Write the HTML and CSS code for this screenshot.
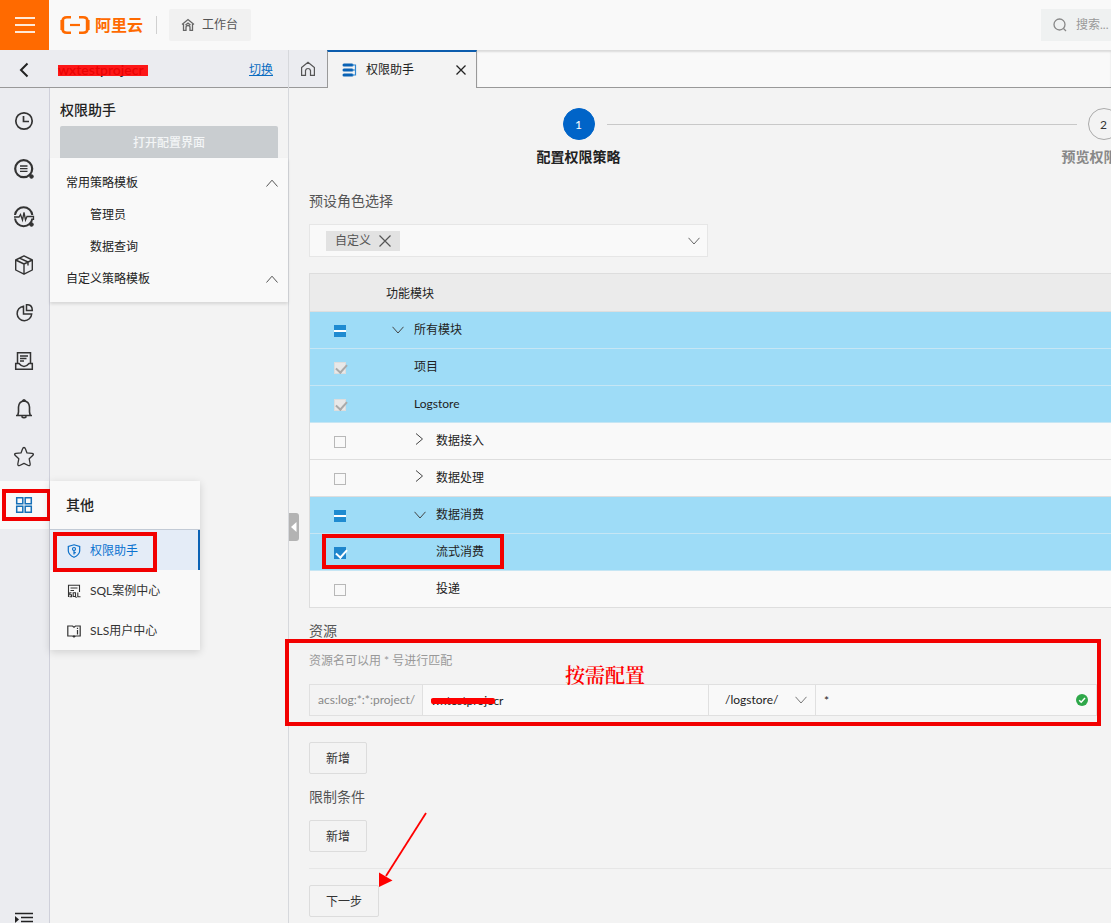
FILE: index.html
```html
<!DOCTYPE html>
<html lang="zh-CN">
<head>
<meta charset="utf-8">
<title>权限助手</title>
<link rel="stylesheet" href="styles.css">
</head>
<body>
<header class="topbar">
  <button class="menu-btn" aria-label="菜单"><span></span><span></span><span></span></button>
  <a class="logo" href="#">
    <svg width="30" height="20" viewBox="0 0 30 20" fill="none" stroke="#ff6a00">
      <path d="M11 2.200H7Q2.500 2.200 2.500 6.200V13.800Q2.500 17.800 7 17.800H11" stroke-width="2.600"/>
      <path d="M2.300 5V15M27.700 5V15" stroke-width="3.800"/>
      <path d="M19 2.200H23Q27.500 2.200 27.500 6.200V13.800Q27.500 17.800 23 17.800H19" stroke-width="2.600"/>
      <path d="M10 10H20" stroke-width="2.200"/>
    </svg>
    <span>阿里云</span>
  </a>
  <span class="topbar-rule"></span>
  <a class="workbench" href="#">
    <svg width="14" height="14" viewBox="0 0 14 14" fill="none" stroke="#666" stroke-width="1.300"><path d="M1 6.500 7 1.500 13 6.500M2.500 6V12.300H5V9.500a2 2 0 0 1 4 0V12.300H11.500V6M4.500 7 7 5 9.500 7"/></svg>
    工作台
  </a>
  <label class="search">
    <svg width="14" height="14" viewBox="0 0 14 14" fill="none" stroke="#888" stroke-width="1.300"><circle cx="6.500" cy="6.500" r="5.500"/><path d="M10.500 10.500 13 13"/></svg>
    <input type="text" placeholder="搜索..." aria-label="搜索">
  </label>
</header>

<div class="shell">
  <aside class="side">
    <div class="project">
      <button class="back" aria-label="返回"><svg width="12" height="16" viewBox="0 0 12 16" fill="none" stroke="#222" stroke-width="2"><path d="M9.500 1.500 3 8l6.500 6.500"/></svg></button>
      <span class="project-name">wxtestprojecr</span>
      <a class="switch" href="#">切换</a>
    </div>
    <div class="side-body">
      <nav class="rail" aria-label="功能">
        <button class="rail-item" aria-label="历史"><svg width="20" height="20" viewBox="0 0 20 20" fill="none" stroke="#333" stroke-width="1.700"><circle cx="10" cy="10" r="8.200"/><path d="M9.500 5V10.500H15"/></svg></button>
        <button class="rail-item" aria-label="日志"><svg width="22" height="22" viewBox="0 0 22 22" fill="none" stroke="#333"><circle cx="10.700" cy="10.700" r="8.500" stroke-width="2.200"/><path d="M7 8H14.500M7 10.700H14.500M7 13.400H14.500" stroke-width="1.300"/><circle cx="18.500" cy="18.500" r="1.800" fill="#333"/></svg></button>
        <button class="rail-item" aria-label="监控"><svg width="22" height="22" viewBox="0 0 22 22" fill="none" stroke="#333"><path d="M2 9A8.700 8.700 0 0 1 19.300 9M19.300 12.500A8.700 8.700 0 0 1 2 12.500" stroke-width="2"/><path d="M1 11H6L7.500 8.500 9.500 14 11 6.500 12.500 14 14 10.500H20.500V14" stroke-width="1.300"/><circle cx="18.500" cy="18.500" r="1.800" fill="#333"/></svg></button>
        <button class="rail-item" aria-label="资源"><svg width="20" height="20" viewBox="0 0 20 20" fill="none" stroke="#333" stroke-width="1.400" stroke-linejoin="round"><path d="M10 .9 18.300 5V15L10 19.200 1.700 15V5ZM1.700 5 10 9 18.300 5M10 9V19M5.500 3.200 14 7V10.500"/></svg></button>
        <button class="rail-item" aria-label="仪表盘"><svg width="20" height="20" viewBox="0 0 20 20" fill="none" stroke="#333" stroke-width="1.500"><path d="M9.500 3.200A7.300 7.300 0 1 0 17.700 11H9.500ZM12.500 1.800H14Q18.300 2.200 18.300 7.500H12.500Z"/></svg></button>
        <button class="rail-item" aria-label="报表"><svg width="20" height="20" viewBox="0 0 20 20" fill="none" stroke="#333" stroke-width="1.500"><path d="M3.500 12.500V1.800H16.500V12.500M1.700 12.500H5Q10 18.500 15 12.500H18.300V18.300H1.700Z"/><path d="M6 5H14M6 7.500H12.500M6 10H10"/></svg></button>
        <button class="rail-item" aria-label="告警"><svg width="20" height="22" viewBox="0 0 20 22" fill="none" stroke="#333" stroke-width="1.600"><path d="M2 17.500H18M3.800 17.500 4.500 14V9Q5 3.300 10 3 15 3.300 15.500 9V14L16.200 17.500M8.500 3Q10 .5 11.500 3M7.500 18.500Q10 21 12.500 18.500"/></svg></button>
        <button class="rail-item" aria-label="收藏"><svg width="22" height="22" viewBox="0 0 22 22" fill="none" stroke="#333" stroke-width="1.300" stroke-linejoin="round"><path d="M11 1.500Q12 1.500 12.400 2.800L14 6.900 19 7.400Q21 7.800 20.200 9L16.200 12.800 17.200 18Q17.200 20.300 15.300 19.500L11 17.300 6.700 19.500Q4.800 20.300 4.800 18L5.800 12.800 1.800 9Q1 7.800 3 7.400L8 6.900 9.600 2.800Q10 1.500 11 1.500Z"/></svg></button>
        <div class="rail-group">
          <button class="rail-item rail-active" aria-label="其他"><svg width="18" height="18" viewBox="0 0 18 18" fill="none" stroke="#1670b8" stroke-width="1.500"><path d="M1.700 1.700H7.800V7.800H1.700ZM10.200 1.700H16.300V7.800H10.200ZM1.700 10.200H7.800V16.300H1.700ZM10.200 10.200H16.300V16.300H10.200Z"/></svg></button>
          <span class="mark mark-rail"></span>
          <div class="flyout">
            <h2 class="flyout-title">其他</h2>
            <a class="flyout-item selected" href="#"><svg width="14" height="14" viewBox="0 0 14 14" fill="none" stroke="#0a6fc9" stroke-width="1.200"><path d="M7 .8 12.700 2.500V7Q12.300 11 7 13.300 1.700 11 1.300 7V2.500Z"/><circle cx="7" cy="5" r="1.500"/><path d="M7 6.500V10.500M7 8.700H8.800"/></svg>权限助手</a>
            <a class="flyout-item" href="#"><svg width="14" height="14" viewBox="0 0 14 14" fill="none" stroke="#333" stroke-width="1.100"><path d="M1.500 13V1.200H12.500V8M3.500 4H10.500M3.500 6.500H7M4.500 8.800H2.800V10.800H4.500V12.800H2.500M6.200 8.800H8.500V12.500H6.200ZM8 12 9.500 13.800M10.800 8.500V12.800H13.500"/></svg>SQL案例中心</a>
            <a class="flyout-item" href="#"><svg width="14" height="14" viewBox="0 0 14 14" fill="none" stroke="#333" stroke-width="1.200"><path d="M.8 2H5.500L7 3.200 8.500 2H13.200V12H8.500L7 13 5.500 12H.8ZM10.500 6V10.500M10.500 3.800V5M7 11V13"/></svg>SLS用户中心</a>
            <span class="mark mark-flyout"></span>
          </div>
        </div>
        <button class="rail-collapse" aria-label="展开"><svg width="18" height="18" viewBox="0 0 18 18" fill="none" stroke="#222" stroke-width="1.600"><path d="M0 1.500H18M6 5.500H18M6 9.500H18M0 13.500H18"/><path d="M0 4 4 7.500 0 11Z" fill="#222" stroke="none"/></svg></button>
      </nav>
      <section class="panel">
        <h1 class="panel-title">权限助手</h1>
        <button class="open-config" disabled>打开配置界面</button>
        <ul class="tree">
          <li class="tree-row">常用策略模板<svg width="12" height="8" viewBox="0 0 12 8" fill="none" stroke="#555"><path d="M.5 7.500 6 1.200 11.500 7.500"/></svg></li>
          <li class="tree-row tree-leaf">管理员</li>
          <li class="tree-row tree-leaf">数据查询</li>
          <li class="tree-row">自定义策略模板<svg width="12" height="8" viewBox="0 0 12 8" fill="none" stroke="#555"><path d="M.5 7.500 6 1.200 11.500 7.500"/></svg></li>
        </ul>
      </section>
    </div>
    <button class="handle" aria-label="收起"><svg width="6" height="10" viewBox="0 0 6 10"><path d="M5.500 0V10L0 5Z" fill="#fff"/></svg></button>
  </aside>

  <main class="main">
    <div class="tabs">
      <button class="tab-home" aria-label="首页"><svg width="16" height="16" viewBox="0 0 16 16" fill="none" stroke="#555" stroke-width="1.200"><path d="M1.600 6.500 8 1.200 14.400 6.500V14.400H10.500V9.500Q10 7.500 8 7.500T5.500 9.500V14.400H1.600Z"/></svg></button>
      <div class="tab">
        <svg width="15" height="14" viewBox="0 0 15 14"><path d="M2 2H10M2 7H10M2 12H10" stroke="#0a62b5" stroke-width="3" stroke-linecap="round"/><path d="M10 2H13.500V12H10M10 7H13.500" fill="none" stroke="#2f86d0" stroke-width="1.200"/></svg>
        <span class="tab-label">权限助手</span>
        <button class="icon-btn" aria-label="关闭"><svg width="12" height="12" viewBox="0 0 12 12" stroke="#222" stroke-width="1.300"><path d="M1.500 1.500 10.500 10.500M10.500 1.500 1.500 10.500"/></svg></button>
      </div>
      <div class="tabs-rest"></div>
    </div>

    <div class="content">
      <ol class="steps">
        <li class="step current"><span class="dot">1</span><span class="step-label">配置权限策略</span></li>
        <li class="step"><span class="dot">2</span><span class="step-label">预览权限策略</span></li>
      </ol>

      <h3 class="label label-role">预设角色选择</h3>
      <div class="role-select">
        <span class="tag">自定义<button class="icon-btn" aria-label="移除"><svg width="14" height="14" viewBox="0 0 14 14" stroke="#555" stroke-width="1.200"><path d="M1.500 1.500 12.500 12.500M12.500 1.500 1.500 12.500"/></svg></button></span>
        <button class="icon-btn" aria-label="展开选项"><svg width="12" height="8" viewBox="0 0 12 8" fill="none" stroke="#666"><path d="M.5 .8 6 7 11.500 .8"/></svg></button>
      </div>

      <table class="modules">
        <thead><tr><th class="c-check"></th><th>功能模块</th></tr></thead>
        <tbody>
          <tr class="on"><td class="c-check"><input type="checkbox" class="partial" aria-label="所有模块"></td><td class="l0"><svg class="arrow" width="12" height="8" viewBox="0 0 12 8"><path d="M.5 .8 6 7 11.500 .8"/></svg>所有模块</td></tr>
          <tr class="on"><td class="c-check"><input type="checkbox" checked disabled aria-label="项目"></td><td class="l1">项目</td></tr>
          <tr class="on"><td class="c-check"><input type="checkbox" checked disabled aria-label="Logstore"></td><td class="l1">Logstore</td></tr>
          <tr><td class="c-check"><input type="checkbox" aria-label="数据接入"></td><td class="l1"><svg class="arrow" width="12" height="12" viewBox="0 0 12 12"><path d="M2 .5 8.500 6 2 11.500"/></svg>数据接入</td></tr>
          <tr><td class="c-check"><input type="checkbox" aria-label="数据处理"></td><td class="l1"><svg class="arrow" width="12" height="12" viewBox="0 0 12 12"><path d="M2 .5 8.500 6 2 11.500"/></svg>数据处理</td></tr>
          <tr class="on"><td class="c-check"><input type="checkbox" class="partial" aria-label="数据消费"></td><td class="l1"><svg class="arrow" width="12" height="8" viewBox="0 0 12 8"><path d="M.5 .8 6 7 11.500 .8"/></svg>数据消费</td></tr>
          <tr class="on"><td class="c-check"><input type="checkbox" checked aria-label="流式消费"><span class="mark mark-row"></span></td><td class="l2">流式消费</td></tr>
          <tr><td class="c-check"><input type="checkbox" aria-label="投递"></td><td class="l2">投递</td></tr>
        </tbody>
      </table>

      <h3 class="label">资源</h3>
      <div class="resource">
        <p class="hint">资源名可以用 * 号进行匹配</p>
        <div class="res-row">
          <span class="prefix">acs:log:*:*:project/</span>
          <span class="res-project"><input type="text" value="wxtestprojecr" aria-label="project"></span>
          <span class="res-kind">
            <select aria-label="资源类型"><option>/logstore/</option></select>
            <svg width="12" height="8" viewBox="0 0 12 8" fill="none" stroke="#777"><path d="M.5 .8 6 7 11.500 .8"/></svg>
          </span>
          <span class="res-store">
            <input type="text" value="*" aria-label="logstore">
            <svg width="12" height="12" viewBox="0 0 12 12"><circle cx="6" cy="6" r="6" fill="#2fa84a"/><path d="M3.200 6.200 5.200 8.200 9 4" fill="none" stroke="#fff" stroke-width="1.500"/></svg>
          </span>
        </div>
        <span class="note">按需配置</span>
        <span class="mark mark-resource"></span>
      </div>
      <button class="btn btn-add">新增</button>

      <h3 class="label">限制条件</h3>
      <button class="btn btn-limit">新增</button>

      <div class="footer">
        <button class="btn">下一步</button>
        <svg class="pointer" width="50" height="76" viewBox="0 0 50 76"><path d="M47 1 7 64" stroke="#f00" stroke-width="1.800"/><path d="M0 75 0 60.500 13.500 68.500Z" fill="#f00"/></svg>
      </div>
    </div>
  </main>
</div>
</body>
</html>
```

FILE: styles.css
```css
* { box-sizing: border-box; }
body {
  margin: 0;
  height: 100vh;
  display: flex;
  flex-direction: column;
  overflow: hidden;
  background: #f3f3f3;
  color: #222;
  font: 12px/20px Lato, "Noto Sans CJK SC", sans-serif;
}
button, input, select { font: inherit; color: inherit; }
button { border: 0; padding: 0; background: none; cursor: pointer; }
h1, h2, h3, p, ul, ol { margin: 0; padding: 0; font-weight: 400; }
ul, ol { list-style: none; }
a { color: inherit; text-decoration: none; }
svg { display: block; flex: none; }

/* top bar */
.topbar {
  position: relative;
  z-index: 1;
  flex: none;
  display: flex;
  align-items: center;
  height: 50px;
  background: #f9f9f9;
  box-shadow: 0 1px 2px rgba(0, 0, 0, .25);
}
.menu-btn {
  width: 49px;
  height: 50px;
  display: flex;
  flex-direction: column;
  align-items: center;
  justify-content: center;
  gap: 5px;
  background: #ff6a00;
}
.menu-btn span { width: 20px; height: 2px; background: #ffe9d8; }
.logo {
  display: flex;
  align-items: center;
  gap: 5px;
  margin-left: 11px;
  color: #ff6a00;
  font-size: 16px;
  font-weight: 700;
}
.topbar-rule { width: 1px; height: 18px; margin: 0 12px 0 13px; background: #d0d0d0; }
.workbench {
  display: flex;
  align-items: center;
  gap: 7px;
  height: 32px;
  padding: 0 13px 0 12px;
  border-radius: 2px;
  background: #f1f1f1;
  color: #555;
}
.search {
  display: flex;
  align-items: center;
  gap: 9px;
  width: 70px;
  height: 32px;
  margin-left: auto;
  padding-left: 12px;
  background: #eff1f1;
}
.search input { flex: 1; min-width: 0; padding: 0; border: 0; background: none; outline: 0; }
.search input::placeholder { color: #999; }

.shell { flex: 1; min-height: 0; display: flex; }

/* left side */
.side {
  position: relative;
  z-index: 1;
  flex: none;
  width: 289px;
  display: flex;
  flex-direction: column;
  border-right: 1px solid #d6d8dc;
}
.project {
  display: flex;
  align-items: center;
  height: 38px;
  padding: 2px 15px 0 0;
  border-bottom: 1px solid #999;
  background: #ebecf0;
}
.back { width: 48px; display: flex; justify-content: center; }
.project-name { position: relative; margin-left: 10px; font-size: 14px; font-weight: 600; }
.project-name::after {
  content: "";
  position: absolute;
  inset: 5px -4px 4px 0;
  background: #f00;
  opacity: .9;
}
.switch { margin-left: auto; color: #0a6cc0; text-decoration: underline; }
.side-body { flex: 1; min-height: 0; display: flex; }
.rail {
  width: 50px;
  display: flex;
  flex-direction: column;
  padding-top: 9px;
  border-right: 1px solid #cfd0da;
  background: #ebecf0;
}
.rail-item { width: 48px; height: 48px; display: flex; align-items: center; justify-content: center; }
.rail-group { position: relative; }
.rail-active { width: 49px; padding-right: 1px; background: #f9f9f9; }
.rail-collapse { height: 11px; margin-top: auto; margin-left: 15px; overflow: hidden; }

.flyout {
  position: absolute;
  left: 50px;
  top: 0;
  width: 150px;
  background: #f9f9f9;
  box-shadow: 0 2px 8px rgba(0, 0, 0, .15);
}
.flyout-title {
  height: 49px;
  padding-left: 16px;
  border-bottom: 1px solid #c3cbd6;
  font-size: 14px;
  font-weight: 500;
  line-height: 48px;
}
.flyout-item { display: flex; align-items: center; gap: 9px; height: 40px; padding: 2px 0 0 17px; color: #333; }
.flyout-item.selected { border-right: 2px solid #0a62b5; background: #e4ecf7; color: #0a72d0; }

.mark { position: absolute; border: 4px solid #f20000; pointer-events: none; }
.mark-rail { left: 2px; top: 8px; width: 49px; height: 32px; }
.mark-flyout { left: 3px; top: 51px; width: 104px; height: 40px; }

.panel { flex: 1; }
.panel-title { padding: 12px 0 6px 10px; font-size: 14px; font-weight: 500; }
.open-config {
  display: block;
  width: calc(100% - 20px);
  height: 32px;
  margin-left: 10px;
  padding-top: 2px;
  border-radius: 2px 2px 0 0;
  background: #c9cdd0;
  color: #f3f5f6;
  font-weight: 500;
}
.tree { padding: 8px 10px 8px 16px; background: #f9f9f9; box-shadow: 0 2px 3px rgba(0, 0, 0, .12); }
.tree-row { display: flex; align-items: center; justify-content: space-between; height: 32px; padding-top: 2px; }
.tree-leaf { padding-left: 24px; }
.handle {
  position: absolute;
  left: 289px;
  top: 463px;
  width: 10px;
  height: 28px;
  display: flex;
  align-items: center;
  justify-content: center;
  border-radius: 0 3px 3px 0;
  background: #b3b3b3;
}

/* tabs */
.main { flex: 1; min-width: 0; display: flex; flex-direction: column; }
.tabs { position: relative; z-index: 2; flex: none; display: flex; height: 38px; }
.tab-home {
  width: 38px;
  display: flex;
  align-items: center;
  justify-content: center;
  border-bottom: 1px solid #999;
  background: #ebecf0;
}
.tab {
  display: flex;
  align-items: center;
  width: 150px;
  padding: 0 9px 0 14px;
  border: 1px solid #999;
  border-top: 2px solid #0b5cad;
  border-bottom: 0;
  background: #f3f3f3;
}
.tab-label { margin-left: 9px; }
.tab .icon-btn { margin-left: auto; }
.icon-btn { display: flex; }
.tabs-rest { flex: 1; border-bottom: 1px solid #999; background: #f9f9f9; box-shadow: inset 0 2px 2px rgba(0, 0, 0, .12); }

/* form */
.content { flex: 1; min-height: 0; padding: 20px 0 0 20px; }
.steps { display: flex; padding-left: 7px; overflow: hidden; }
.step {
  position: relative;
  flex: 0 0 525px;
  display: flex;
  flex-direction: column;
  align-items: center;
  gap: 7px;
  color: #888;
}
.step.current { color: #222; }
.step.current::after {
  content: "";
  position: absolute;
  top: 16px;
  left: calc(50% + 28px);
  width: calc(100% - 55px);
  height: 1px;
  background: #c8c8c8;
}
.dot {
  width: 32px;
  height: 32px;
  border: 1px solid #aaa;
  border-radius: 50%;
  color: #333;
  line-height: 31px;
  text-align: center;
}
.current .dot { border-color: #0064c8; background: #0064c8; color: #fff; }
.step-label { font-size: 14px; font-weight: 700; }
.label { margin-top: 13px; color: #555; font-size: 14px; }
.label-role { margin-top: 24px; }
.role-select {
  display: flex;
  align-items: center;
  justify-content: space-between;
  width: 399px;
  height: 33px;
  margin-top: 13px;
  padding: 0 7px 0 16px;
  border: 1px solid #e6e6e6;
  background: #f9f9f9;
}
.tag { display: flex; align-items: center; gap: 7px; padding: 0 8px 0 9px; background: #e2e2e2; color: #555; }

.modules {
  width: 100%;
  margin-top: 16px;
  border: 1px solid #ddd;
  border-right: 0;
  border-bottom: 0;
  border-spacing: 0;
  background: #f9f9f9;
}
.modules th, .modules td { height: 37px; padding: 0; border-bottom: 1px solid #dedede; text-align: left; font-weight: 400; }
.modules th { height: 38px; padding: 2px 0 0 16px; background: #ebebeb; }
.modules .on td { background: #9edcf7; border-bottom-color: #c6e6f4; }
.modules .c-check { position: relative; width: 60px; padding-left: 24px; }
.modules .l0 { padding-left: 22px; }
.modules .l1 { padding-left: 44px; }
.modules .l2 { padding-left: 66px; }
.modules .arrow { display: inline-block; margin-right: 10px; fill: none; stroke: #444; vertical-align: 0; }
.mark-row { z-index: 1; left: 12px; top: 0; width: 182px; height: 35px; }

input[type="checkbox"] {
  appearance: none;
  display: block;
  width: 12px;
  height: 12px;
  margin: 2px 0 0;
  border: 1px solid #b8b8b8;
  background: #f9f9f9;
}
input.partial[type="checkbox"] { border: 0; background: linear-gradient(#1f8bd1 5px, #fff 5px 7px, #1f8bd1 7px); }
input[type="checkbox"]:checked { position: relative; border-color: #1f86cc; background: #1f86cc; }
input[type="checkbox"]:checked::after {
  content: "";
  position: absolute;
  left: 3px;
  top: -1px;
  width: 5px;
  height: 9px;
  border: solid #fff;
  border-width: 0 2px 2px 0;
  transform: rotate(42deg);
}
input[type="checkbox"]:checked:disabled { border-color: #ddd; background: #e8e8e8; }
input[type="checkbox"]:checked:disabled::after { border-color: #aaa; }

.resource { position: relative; z-index: 2; margin-top: 10px; }
.hint { color: #999; }
.res-row {
  display: flex;
  height: 32px;
  margin: 13px 14px 0 0;
  border: 1px solid #e0e0e0;
  background: #f9f9f9;
  line-height: 30px;
}
.prefix { width: 112px; padding-left: 8px; background: #f3f3f3; color: #888; white-space: nowrap; }
.res-row > span + span { position: relative; border-left: 1px solid #e0e0e0; }
.res-row input { width: 100%; height: 100%; padding: 0 8px; border: 0; background: none; outline: 0; }
.res-project { width: 286px; }
.res-project::after {
  content: "";
  position: absolute;
  left: 8px;
  top: 13px;
  width: 64px;
  height: 6px;
  border-radius: 2px;
  background: #f00;
}
.res-kind { width: 107px; }
.res-kind select { appearance: none; width: 100%; height: 100%; padding: 0 16px; border: 0; background: none; outline: 0; }
.res-kind svg { position: absolute; right: 8px; top: 11px; pointer-events: none; }
.res-store { flex: 1; }
.res-store svg { position: absolute; right: 8px; top: 9px; }
.note {
  position: absolute;
  left: 256px;
  top: 10px;
  color: #f00;
  font: 600 20px/28px "Noto Serif CJK SC", "Noto Sans CJK SC", serif;
}
.mark-resource { inset: -12px 10px -10px -24px; }

.btn { display: block; height: 32px; padding: 2px 16px 0; border: 1px solid #dcdcdc; border-radius: 2px; color: #333; }
.btn-add { margin-top: 26px; }
.btn-limit { margin-top: 13px; }
.footer { position: relative; margin-top: 16px; padding-top: 16px; border-top: 1px solid #e6e6e6; }
.pointer { position: absolute; left: 70px; top: -57px; }
```
